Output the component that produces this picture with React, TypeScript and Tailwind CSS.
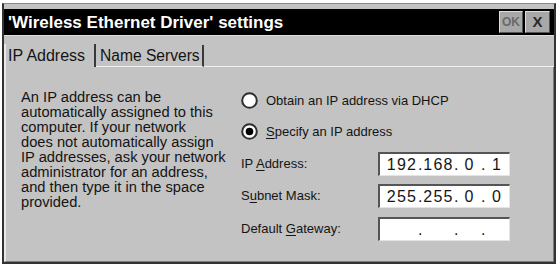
import React from 'react';

const font = "font-['Liberation_Sans',Arial,Helvetica,sans-serif]";

function Radio({ checked }: { checked?: boolean }) {
  return (
    <svg width="17" height="17" viewBox="0 0 17 17" className="shrink-0">
      <circle cx="8.5" cy="8.5" r="7.3" fill="#fff" stroke="#2e2e2e" strokeWidth="2" />
      {checked && <circle cx="8.5" cy="8.5" r="3.8" fill="#000" />}
    </svg>
  );
}

function IpBox({ parts }: { parts: string[] }) {
  const widths = ['w-[38px] pl-[6px]', 'w-[32px] pl-[1px]', 'w-[23px]', 'w-[24px]'];
  return (
    <div className="flex h-[24px] w-[132px] items-center bg-white border-l-2 border-t-2 border-[#555] border-r border-b border-r-[#e4e4e4] border-b-[#e4e4e4] text-[16px] tracking-[1.2px] text-[#151515]">
      {parts.map((p, i) => (
        <React.Fragment key={i}>
          <span className={`${widths[i]} text-center`}>{p}</span>
          {i < 3 && <span className="w-[4px] text-center tracking-normal">.</span>}
        </React.Fragment>
      ))}
    </div>
  );
}

const lines = [
  'An IP address can be',
  'automatically assigned to this',
  'computer. If your network',
  'does not automatically assign',
  'IP addresses, ask your network',
  'administrator for an address,',
  'and then type it in the space',
  'provided.',
];

export default function App() {
  return (
    <div className={`h-[265px] w-[559px] overflow-hidden bg-white ${font} text-[#141414]`}>
      <div className="ml-[2px] mt-[3px] flex h-[261px] w-[554px] flex-col border-2 border-t border-[#333] border-t-[#8a8a8a] bg-[#c3c3c3] pt-[5px]">
        {/* title bar */}
        <div className="flex h-[26px] shrink-0 items-center bg-black pl-[4px] pr-[4px]">
          <span className="flex-1 text-[17px] font-bold leading-none text-white">
            'Wireless Ethernet Driver' settings
          </span>
          <div className="flex gap-[2px]">
            <div className="flex h-[22px] w-[24px] items-center justify-center border border-t-[#dcdcdc] border-l-[#dcdcdc] border-b-[#555] border-r-[#555] bg-[#a8a8a8] text-[12px] font-bold text-[#6a6a6a]">
              OK
            </div>
            <div className="flex h-[22px] w-[25px] items-center justify-center border border-t-[#dcdcdc] border-l-[#dcdcdc] border-b-[#555] border-r-[#555] bg-[#a8a8a8] text-[15px] font-bold text-[#2a2a2a]">
              X
            </div>
          </div>
        </div>

        {/* tabs */}
        <div className="flex h-[32px] shrink-0 items-end border-t border-[#dedede]">
          <div className="flex h-[23px] w-[92px] items-center border-l-2 border-r-2 border-l-[#e8e8e8] border-r-[#3a3a3a] pl-[2px] text-[16px]">
            IP Address
          </div>
          <div className="flex h-[22px] w-[108px] items-center border-r-2 border-b border-r-[#3a3a3a] border-b-[#f0f0f0] pl-[4px] text-[15.6px]">
            Name Servers
          </div>
          <div className="h-px flex-1 bg-[#f0f0f0]" />
        </div>

        {/* panel */}
        <div className="flex flex-1 border-l-2 border-r border-b border-l-[#e8e8e8] border-r-[#7a7a7a] border-b-[#7a7a7a] pl-[15px]">
          <div className="w-[220px] pt-[23px] text-[14.7px] leading-[15px]">
            {lines.map((l) => (
              <div key={l} className="whitespace-nowrap">{l}</div>
            ))}
          </div>

          <div className="flex flex-col text-[13px]">
            <div className="mt-[25px] flex h-[17px] items-center gap-[8px]">
              <Radio />
              <span>Obtain an IP address via DHCP</span>
            </div>
            <div className="mt-[14px] flex h-[17px] items-center gap-[8px]">
              <Radio checked />
              <span>
                <span className="underline underline-offset-2">S</span>pecify an IP address
              </span>
            </div>

            <div className="mt-[12px] flex items-center">
              <span className="w-[137px]">
                IP <span className="underline underline-offset-2">A</span>ddress:
              </span>
              <IpBox parts={['192', '168', '0', '1']} />
            </div>
            <div className="mt-[8px] flex items-center">
              <span className="w-[137px]">
                S<span className="underline underline-offset-2">u</span>bnet Mask:
              </span>
              <IpBox parts={['255', '255', '0', '0']} />
            </div>
            <div className="mt-[9px] flex items-center">
              <span className="w-[137px]">
                Default <span className="underline underline-offset-2">G</span>ateway:
              </span>
              <IpBox parts={['', '', '', '']} />
            </div>
          </div>
        </div>
      </div>
    </div>
  );
}
